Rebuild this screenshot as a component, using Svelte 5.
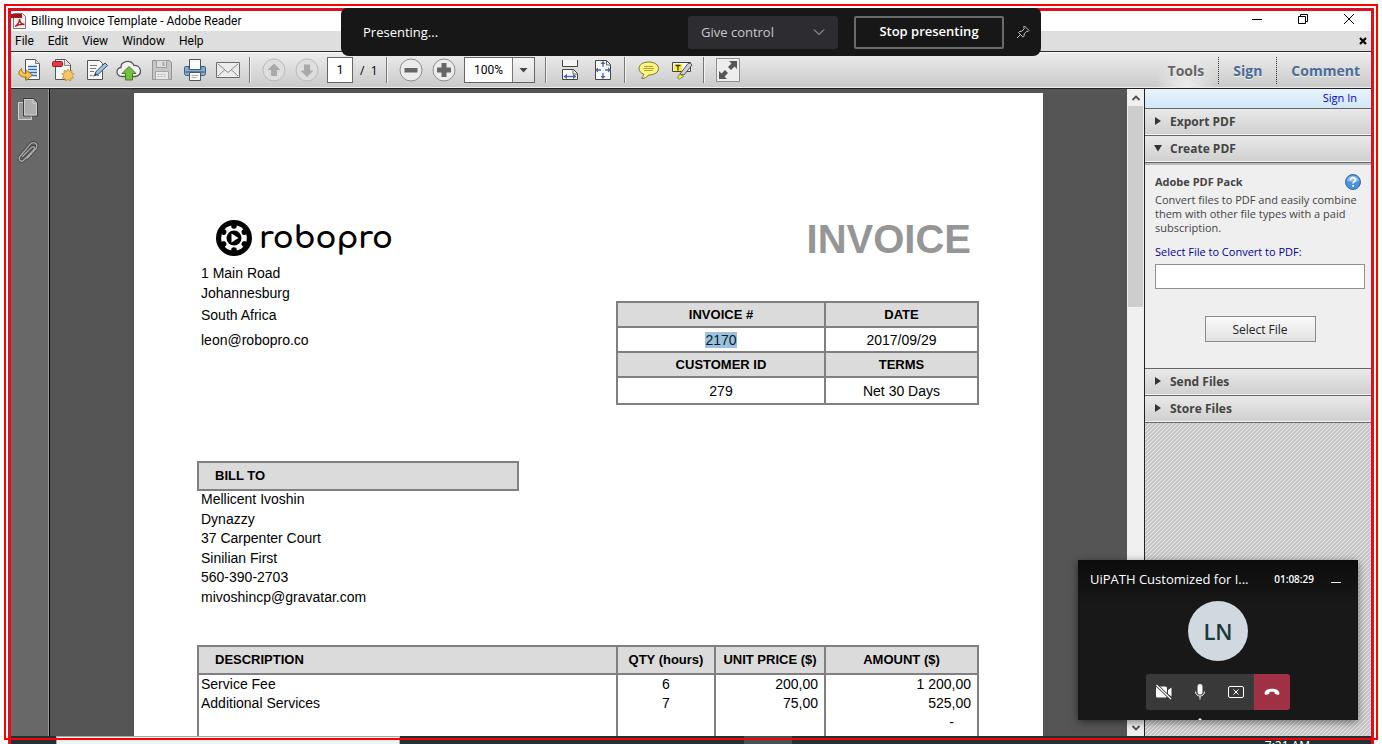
<script>
  const menus = ['File', 'Edit', 'View', 'Window', 'Help'];
  const address = ['1 Main Road', 'Johannesburg', 'South Africa', 'leon@robopro.co'];
  const billTo = [
    'Mellicent Ivoshin',
    'Dynazzy',
    '37 Carpenter Court',
    'Sinilian First',
    '560-390-2703',
    'mivoshincp@gravatar.com'
  ];
  const items = [
    { name: 'Service Fee', qty: '6', price: '200,00', amount: '1 200,00' },
    { name: 'Additional Services', qty: '7', price: '75,00', amount: '525,00' }
  ];
  const notches = [30, 90, 150, 210, 270, 330];
  let page = $state('1');
  let zoom = $state('100%');
  let filePath = $state('');
</script>

{#snippet section(label, open)}
  <button class="section" class:open aria-expanded={open}>
    <svg width="8" height="8" viewBox="0 0 8 8" aria-hidden="true">
      <path d={open ? 'M0 1h8L4 7.5z' : 'M1 0v8l6-4z'} fill="#333" />
    </svg>
    {label}
  </button>
{/snippet}

<div class="desktop">
  <div class="window">
    <header class="titlebar">
      <svg width="16" height="16" viewBox="0 0 16 16" aria-hidden="true">
        <path d="M2.500.5h9l3 3v12h-12z" fill="#f4f0f0" stroke="#777" />
        <path d="M0 1h11v4H0z" fill="#a3171c" />
        <path d="M4 13.500c3-2 4.500-5 4.500-7.500 0 3 2 5 5 5.500-4-.5-7 .5-9.500 2z" fill="none" stroke="#b01c22" stroke-width="1.400" />
      </svg>
      <h1>Billing Invoice Template - Adobe Reader</h1>
      <div class="caption">
        <button aria-label="Minimize"><svg width="12" height="12" viewBox="0 0 12 12"><path d="M1 6.500h10" stroke="#000" /></svg></button>
        <button aria-label="Restore"><svg width="12" height="12" viewBox="0 0 12 12"><path d="M1.500 3.500h7v7h-7zM3.500 3.500v-2h7v7h-2" fill="none" stroke="#000" /></svg></button>
        <button aria-label="Close"><svg width="12" height="12" viewBox="0 0 12 12"><path d="M1 1l10 10M11 1L1 11" stroke="#000" /></svg></button>
      </div>
    </header>

    <nav class="menubar">
      {#each menus as menu}<button>{menu}</button>{/each}
      <button class="doc-close" aria-label="Close document">
        <svg width="8" height="8" viewBox="0 0 8 8"><path d="M1 1l6 6M7 1L1 7" stroke="#000" stroke-width="2.200" /></svg>
      </button>
    </nav>

    <div class="toolbar">
      <button class="tool" aria-label="Open">
        <svg width="24" height="24" viewBox="0 0 24 24">
          <path d="M7.500 1.500h10l4 4v16h-14z" fill="#fafafa" stroke="#555" />
          <path d="M17.500 1.500v4h4" fill="#ddd" stroke="#777" />
          <path d="M10 8.500h9M10 11.500h9M10 14.500h9M12 17.500h7" stroke="#2c6fbe" stroke-width="1.300" />
          <path d="M3.500 10.500c-5 4-2.500 9 4.500 8.500v3.500l6.500-5.500L8 12v3.500c-3 0-4.500-1.500-4.500-5z" fill="#f2c14f" stroke="#a87a1c" />
        </svg>
      </button>
      <button class="tool" aria-label="Create PDF">
        <svg width="24" height="24" viewBox="0 0 24 24">
          <path d="M4.500 1.500h10l5 5v15h-15z" fill="#f6f6f6" stroke="#555" />
          <path d="M13.500 2v5.500h5.500" fill="#ddd" stroke="#888" />
          <rect x="1.500" y="3.500" width="10" height="5" rx="1" fill="#e03a44" stroke="#a81822" />
          <path d="M17 11l1.400 2.300 2.600-.8-.4 2.700 2.600.8-2 1.800 1.400 2.200-2.700.3-.3 2.700L17 21.500 14.400 23l-.3-2.700-2.700-.3 1.400-2.200-2-1.800 2.600-.8-.4-2.700 2.600.8z" fill="#f3c765" stroke="#c8994a" />
        </svg>
      </button>
      <button class="tool" aria-label="Sign or fill">
        <svg width="24" height="24" viewBox="0 0 24 24">
          <path d="M3.500 2.500h12l3 3v16h-15z" fill="#f8f8f8" stroke="#555" />
          <path d="M6 7.500h7M6 10.500h6M6 13.500h4M6 18c2-2 3 1 5-.5s2 .5 4 0" fill="none" stroke="#777" />
          <path d="M10.500 17.500l1.500-4 9-8.500 2.500 2.500-9 8.500z" fill="#9fc1e4" stroke="#35506e" />
          <path d="M10.500 17.500l1-2.500 1.500 1.500z" fill="#333" />
        </svg>
      </button>
      <button class="tool" aria-label="Upload">
        <svg width="26" height="24" viewBox="0 0 26 24">
          <path d="M6.500 18.500C-.5 18.500-.5 10 5 9.500 4.500 3.500 14.500.5 18 7.500c7-.5 9.500 9.500 1.500 11z" fill="#f2f2f2" stroke="#555" stroke-width="1.300" />
          <path d="M13 8.500l7 7h-3.500v6.500h-7v-6.500H6z" fill="#74c043" stroke="#3c8018" />
        </svg>
      </button>
      <button class="tool" aria-label="Save" disabled>
        <svg width="24" height="24" viewBox="0 0 24 24">
          <path d="M2.500 2.500h17l2 2v17h-19z" fill="#c5c5c5" stroke="#949494" />
          <path d="M6.500 2.500h10v7h-10z" fill="#dedede" stroke="#9c9c9c" /><path d="M12.500 4v4h2V4z" fill="#a5a5a5" />
          <path d="M5.500 13.500h13v8h-13z" fill="#e8e8e8" stroke="#a5a5a5" /><path d="M7.500 16.500h9M7.500 18.500h9" stroke="#b8b8b8" stroke-dasharray="2 1" />
        </svg>
      </button>
      <button class="tool" aria-label="Print">
        <svg width="24" height="24" viewBox="0 0 24 24">
          <path d="M6.500 1.500h11v10h-11z" fill="#fafafa" stroke="#555" />
          <path d="M1.500 9.500q0-1 1.500-1h3v3h12v-3h3q1.500 0 1.500 1v6q0 2-2 2h-17q-2 0-2-2z" fill="#85add3" stroke="#3e5f80" />
          <path d="M2.500 14h19" stroke="#355070" />
          <path d="M6.500 14.500h11v8h-11z" fill="#fafafa" stroke="#555" /><path d="M8.500 17.500h7M8.500 19.500h5" stroke="#aaa" />
        </svg>
      </button>
      <button class="tool" aria-label="Email">
        <svg width="24" height="24" viewBox="0 0 24 24">
          <path d="M.5 4.500h23v15H.5z" fill="#ececec" stroke="#6c6c6c" />
          <path d="M2 6l10 8.500L22 6M2 18l7-6.500M22 18l-7-6.500" fill="none" stroke="#8a8a8a" />
        </svg>
      </button>
      <span class="sep"></span>
      <button class="tool" aria-label="Previous page" disabled>
        <svg width="24" height="24" viewBox="0 0 24 24"><circle cx="12" cy="12" r="11" fill="#dedede" stroke="#b9b9b9" /><path d="M12 5.500l6.500 6.500H15v6H9v-6H5.500z" fill="#a9a9a9" /></svg>
      </button>
      <button class="tool" aria-label="Next page" disabled>
        <svg width="24" height="24" viewBox="0 0 24 24"><circle cx="12" cy="12" r="11" fill="#dedede" stroke="#b9b9b9" /><path d="M12 19l6.500-6.500H15v-6H9v6H5.500z" fill="#a9a9a9" /></svg>
      </button>
      <input class="page-no" aria-label="Page number" bind:value={page} />
      <span class="page-total">/&nbsp; 1</span>
      <span class="sep"></span>
      <button class="tool" aria-label="Zoom out">
        <svg width="24" height="24" viewBox="0 0 24 24"><circle cx="12" cy="12" r="11" fill="#ececec" stroke="#8c8c8c" /><path d="M5.500 10h13v4.500h-13z" fill="#666" /></svg>
      </button>
      <button class="tool" aria-label="Zoom in">
        <svg width="24" height="24" viewBox="0 0 24 24"><circle cx="12" cy="12" r="11" fill="#ececec" stroke="#8c8c8c" /><path d="M9.500 5h5v4.500H19v5h-4.500V19h-5v-4.500H5v-5h4.500z" fill="#666" /></svg>
      </button>
      <span class="zoom">
        <select aria-label="Zoom level" bind:value={zoom}><option>100%</option></select>
        <svg width="22" height="24" viewBox="0 0 22 24" aria-hidden="true"><path d="M.5 0v24" stroke="#777" /><path d="M7.500 10h8L11.500 14.500z" fill="#444" /></svg>
      </span>
      <span class="sep"></span>
      <button class="tool" aria-label="Fit width">
        <svg width="24" height="24" viewBox="0 0 24 24">
          <path d="M4.500 2v6.500h15V2" fill="#f4f4f4" stroke="#444" />
          <path d="M4.500 11.500h11l4 4v6h-15z" fill="#f8f8f8" stroke="#444" /><path d="M15 12v4h4" fill="none" stroke="#666" />
          <path d="M6 18.500h12" stroke="#4668a8" stroke-width="1.300" /><path d="M5.500 18.500l3.500-2.500v5zM18.500 18.500L15 16v5z" fill="#4668a8" />
        </svg>
      </button>
      <button class="tool" aria-label="Fit page">
        <svg width="24" height="24" viewBox="0 0 24 24">
          <path d="M4.500 2.500h11l4 4v15h-15z" fill="#f8f8f8" stroke="#444" /><path d="M15.500 3v4h4" fill="none" stroke="#666" />
          <path d="M12 4v5M12 15v5M5.500 12h4.500M14 12h5" stroke="#4668a8" stroke-width="1.300" />
          <path d="M12 3l2.500 3h-5zM12 21l2.500-3h-5zM4 12l3-2.500v5zM20 12l-3-2.500v5z" fill="#4668a8" />
        </svg>
      </button>
      <span class="sep"></span>
      <button class="tool" aria-label="Add sticky note">
        <svg width="24" height="24" viewBox="0 0 24 24">
          <path d="M11.500 4C5 4 2 7.500 2 10.500c0 3 2 4.500 4.500 5.500 0 2-1 3.500-2 4.500 3.500 0 6-1.500 7-3.500 6.500 0 10-3 10-6.500S18 4 11.500 4z" fill="#fdf583" stroke="#7a7430" />
          <path d="M7 8.500h9M6.500 10.500h10.500M7 12.500h9" stroke="#b0a22e" />
        </svg>
      </button>
      <button class="tool" aria-label="Highlight text">
        <svg width="24" height="24" viewBox="0 0 24 24">
          <path d="M2.500 4.500h18v9h-18z" fill="#fafafa" stroke="#444" /><path d="M4 6h8v7H4z" fill="#ffef2e" />
          <path d="M5.500 7.500h5M8 7.500v5" stroke="#333" stroke-width="1.300" />
          <path d="M10 16l8-10.500q3-1.500 4 1.500l-8 10z" fill="#cfcfcf" stroke="#555" />
          <path d="M9.500 16l4 2.500-4 2.500-2-1z" fill="#f3ec52" stroke="#888a30" />
        </svg>
      </button>
      <span class="sep"></span>
      <button class="tool" aria-label="Read mode">
        <svg width="24" height="24" viewBox="0 0 24 24">
          <path d="M.5.500h23v23H.5z" fill="#ededed" stroke="#8f8f8f" />
          <path d="M13 3h8v8l-2.500-2.500-3.500 3.500-3-3 3.500-3.500zM11 21H3v-8l2.500 2.500L9 12l3 3-3.500 3.500z" fill="#555" />
        </svg>
      </button>
      <div class="panes">
        <button class="active">Tools</button>
        <button>Sign</button>
        <button>Comment</button>
      </div>
    </div>

    <div class="body">
      <aside class="rail">
        <button aria-label="Page thumbnails">
          <svg width="24" height="26" viewBox="0 0 24 26">
            <path d="M2.500 6.500h13v17h-13z" fill="#999" stroke="#d0d0d0" />
            <path d="M7.500 2.500h10l4 4v13.500h-14z" fill="#aaa" stroke="#3d3d3d" /><path d="M8.500 3.500h8.500v4h3.500v11.500h-12z" fill="#adadad" stroke="#ccc" />
          </svg>
        </button>
        <button aria-label="Attachments">
          <svg width="24" height="26" viewBox="0 0 24 26" fill="none" stroke-linecap="round">
            <path d="M6.500 17.500l9-9c2-2 4 0 2.500 2L8.500 20.500c-3 3.500-7 .5-4.500-3L14 5.500c3.500-4 9-.5 6 4l-8.500 9.500" stroke="#404040" stroke-width="3" />
            <path d="M6.500 17.500l9-9c2-2 4 0 2.500 2L8.500 20.500c-3 3.500-7 .5-4.500-3L14 5.500c3.500-4 9-.5 6 4l-8.500 9.500" stroke="#a9a9a9" stroke-width="1.400" />
          </svg>
        </button>
      </aside>

      <main class="viewer">
        <article class="sheet">
          <div class="top">
            <div class="sender">
              <div class="logo">
                <svg width="38" height="38" viewBox="-19 -19 38 38" aria-hidden="true">
                  <circle r="18" />
                  <circle r="12.800" fill="#fff" />
                  {#each notches as angle}
                    <circle cx="12" r="2.800" transform="rotate({angle})" />
                  {/each}
                  <circle r="7.500" />
                  <path d="M-2.500-4.500L4.500 0l-7 4.500z" fill="#fff" />
                </svg>
                <span>robopro</span>
              </div>
              <address>{#each address as line}<span>{line}</span>{/each}</address>
            </div>
            <div class="facts">
              <h2>INVOICE</h2>
              <table class="meta">
                <tbody>
                  <tr><th>INVOICE #</th><th>DATE</th></tr>
                  <tr><td><mark>2170</mark></td><td>2017/09/29</td></tr>
                  <tr><th>CUSTOMER ID</th><th>TERMS</th></tr>
                  <tr><td>279</td><td>Net 30 Days</td></tr>
                </tbody>
              </table>
            </div>
          </div>

          <section>
            <h3>BILL TO</h3>
            <div class="customer">{#each billTo as line}<span>{line}</span>{/each}</div>
          </section>

          <table class="items">
            <thead>
              <tr><th class="desc">DESCRIPTION</th><th class="qty">QTY (hours)</th><th class="price">UNIT PRICE ($)</th><th class="amount">AMOUNT ($)</th></tr>
            </thead>
            <tbody>
              {#each items as item}
                <tr><td>{item.name}</td><td>{item.qty}</td><td>{item.price}</td><td>{item.amount}</td></tr>
              {/each}
              <tr class="empty"><td></td><td></td><td></td><td>-</td></tr>
            </tbody>
          </table>
        </article>
      </main>

      <div class="scroll">
        <svg width="16" height="17" viewBox="0 0 16 17"><path d="M4.500 11L8 7.500l3.500 3.500" fill="none" stroke="#505050" stroke-width="1.800" /></svg>
        <div class="thumb"></div>
        <svg width="16" height="17" viewBox="0 0 16 17"><path d="M4.500 7L8 10.500 11.500 7" fill="none" stroke="#505050" stroke-width="1.800" /></svg>
      </div>

      <aside class="panel">
        <div class="signin"><a href="#signin">Sign In</a></div>
        {@render section('Export PDF', false)}
        {@render section('Create PDF', true)}
        <div class="create">
          <div class="pack">
            <h4>Adobe PDF Pack</h4>
            <svg width="16" height="16" viewBox="0 0 16 16" role="img" aria-label="Help">
              <circle cx="8" cy="8" r="7.500" fill="#4a90dc" stroke="#2f6cb4" />
              <path d="M2 7a6 5 0 0 1 12 0q-6 2-12 0z" fill="#8bbcf0" />
              <path d="M5.500 6.200c0-3.400 5-3.200 5-.4 0 1.800-2.400 1.800-2.400 3.700M8.100 11v1.700" fill="none" stroke="#fff" stroke-width="1.700" />
            </svg>
          </div>
          <p>Convert files to PDF and easily combine them with other file types with a paid subscription.</p>
          <label for="file">Select File to Convert to PDF:</label>
          <input id="file" bind:value={filePath} />
          <button class="select-file">Select File</button>
        </div>
        {@render section('Send Files', false)}
        {@render section('Store Files', false)}
        <div class="hatch"></div>
      </aside>
    </div>

    <footer class="taskbar">
      <div class="search"></div>
      <div class="running"></div>
      <time>7:21 AM</time>
    </footer>
  </div>

  <div class="share-frame"></div>

  <div class="presenting">
    <span>Presenting...</span>
    <button class="control">Give control
      <svg width="12" height="8" viewBox="0 0 12 8" aria-hidden="true"><path d="M1 1.500l5 5 5-5" fill="none" stroke="#c8c8c8" /></svg>
    </button>
    <button class="stop">Stop presenting</button>
    <button class="pin" aria-label="Pin">
      <svg width="14" height="14" viewBox="0 0 14 14"><path d="M8.500 1l4.500 4.500-1 1-1.200-.2-2.500 2.500-.3 2.400-1 1L2.500 7.500l1-1 2.400-.3 2.400-2.500L7.600 2zM4.600 9.500L1 13" fill="none" stroke="#c4c4c4" /></svg>
    </button>
  </div>

  <section class="call">
    <header>
      <h5>UiPATH Customized for I...</h5>
      <time>01:08:29</time>
      <button aria-label="Minimize call"><svg width="10" height="10" viewBox="0 0 10 10"><path d="M0 8.500h10" stroke="#eee" /></svg></button>
    </header>
    <div class="avatar">LN</div>
    <div class="controls">
      <button aria-label="Turn camera on"><svg width="18" height="16" viewBox="0 0 18 16"><path d="M1 4q0-1.500 1.500-1.500h8Q12 2.500 12 4v8q0 1.500-1.500 1.500h-8Q1 13.500 1 12zM13 6l3.500-2.500v9L13 10z" fill="#fff" /><path d="M1 .5l15.500 15" stroke="#393939" stroke-width="3" /><path d="M1.500 1l14.500 14" stroke="#fff" stroke-width="1.200" /></svg></button>
      <button aria-label="Mute"><svg width="12" height="16" viewBox="0 0 12 16"><rect x="3.500" y="0" width="5" height="10.500" rx="2.500" fill="#fff" /><path d="M1.500 7.500c0 6 9 6 9 0M6 12v3.500" fill="none" stroke="#fff" /></svg></button>
      <button aria-label="Stop sharing"><svg width="16" height="12" viewBox="0 0 16 12"><rect x=".5" y=".5" width="15" height="11" rx="1.500" fill="none" stroke="#fff" /><path d="M5.500 3.500l5 5M10.500 3.500l-5 5" stroke="#fff" /></svg></button>
      <button class="hangup" aria-label="Leave"><svg width="16" height="8" viewBox="0 0 16 8"><path d="M8 .8c3.800 0 6.800 1.400 7.300 3.700.3 1.600-.3 2.500-1.500 2.300l-2.200-.5c-.8-.2-1-.6-1-1.300l-.2-1C9 3.600 7 3.600 5.600 4l-.2 1c0 .7-.2 1.100-1 1.300l-2.200.5C1 7 .4 6.100.7 4.500 1.200 2.200 4.200.8 8 .8z" fill="#fff" /></svg></button>
    </div>
    <svg class="caret" width="4" height="2" viewBox="0 0 4 2" aria-hidden="true"><path d="M0 2l2-2 2 2z" fill="#fff" /></svg>
  </section>
</div>

<style>
  :global(body) { margin: 0; background: #fff; }
  * { box-sizing: border-box; }
  h1, h2, h3, h4, h5, p { margin: 0; }
  svg { display: block; flex: none; }
  button { border: 0; padding: 0; background: none; font: inherit; color: inherit; }
  .desktop {
    position: relative;
    height: 100vh;
    padding: 8px 8px 0;
    overflow: hidden;
    font-family: 'Open Sans', 'Noto Sans', sans-serif;
    font-size: 12px;
    color: #000;
  }
  .window {
    height: 100%;
    display: flex;
    flex-direction: column;
    border: solid #dd1023;
    border-width: 3px 3px 0;
  }
  .share-frame { position: absolute; inset: 4px; border: 2px solid #f00; pointer-events: none; }

  .titlebar, .menubar { font-family: Roboto, 'Open Sans', sans-serif; }
  .titlebar { display: flex; align-items: center; gap: 4px; height: 20px; background: #fff; }
  h1 { font-size: 12px; font-weight: 400; line-height: 16px; }
  .caption { display: flex; gap: 34px; margin-left: auto; padding-right: 16px; }
  .caption svg { margin-bottom: 4px; }
  .menubar {
    display: flex;
    align-items: center;
    gap: 14px;
    height: 21px;
    padding: 0 4px;
    background: #dedede;
    border-bottom: 1px solid #2d2d2d;
  }
  .doc-close { margin-left: auto; }

  .toolbar {
    display: flex;
    align-items: center;
    height: 37px;
    padding-left: 2px;
    background: linear-gradient(#ededed, #c9c9c9);
    border-bottom: 1px solid #222;
    box-shadow: inset 0 1px #f8f8f8, inset 0 -1px #eee;
  }
  .tool { width: 33px; height: 28px; display: grid; place-items: center; flex: none; }
  .sep { width: 2px; height: 26px; margin: 0 6px 0 5px; border-left: 1px solid #777; border-right: 1px solid #f2f2f2; flex: none; }
  .page-no { width: 26px; height: 26px; margin-left: 4px; padding: 0; border: 1px solid #666; text-align: center; font: 12px Roboto, sans-serif; }
  .page-total { width: 28px; padding-left: 7px; white-space: nowrap; }
  .zoom { position: relative; width: 71px; height: 26px; margin: 0 5px 0 4px; border: 1px solid #666; background: #fff; flex: none; }
  .zoom select { width: 100%; height: 24px; padding: 0 0 0 9px; border: 0; appearance: none; background: transparent; font: 12px Roboto, sans-serif; color: #000; }
  .zoom svg { position: absolute; right: 0; top: 0; background: linear-gradient(#f4f4f4, #ddd); pointer-events: none; }
  .panes { display: flex; align-self: stretch; align-items: center; margin-left: auto; font-size: 14px; font-weight: 700; color: #4a6c98; }
  .panes button { height: 27px; padding: 0 14px; text-shadow: 0 1px #f2f2f2; }
  .panes button + button { border-left: 1px dotted #333; }
  .panes button:last-child { padding-right: 11px; }
  .panes .active { align-self: stretch; height: auto; color: #666; background: radial-gradient(ellipse at 50% 100%, #eee, transparent 70%); }

  .body { flex: 1; min-height: 0; display: flex; }
  .rail {
    width: 39px;
    display: flex;
    flex-direction: column;
    align-items: center;
    gap: 17px;
    padding: 7px 5px 0 0;
    background: #686868;
    border-right: 1px solid #000;
    box-shadow: inset -1px 0 #999;
  }
  .viewer { flex: 1; min-width: 0; padding-top: 4px; overflow: hidden; background: #555; font-family: 'Liberation Sans', Arial, sans-serif; }
  .sheet { width: 909px; min-height: 100%; margin: 0 auto; padding: 126px 64px 0 63px; background: #fff; font-size: 14px; }
  .top { display: flex; justify-content: space-between; height: 242px; }
  .logo { display: flex; align-items: center; gap: 6px; height: 38px; margin: 0 0 6px 18px; font: 700 31px Comfortaa, Lato, sans-serif; line-height: 36px; }
  address { display: grid; grid-template-rows: 20px 20px 24px 26px; align-items: center; padding-left: 4px; font-style: normal; }
  .facts { width: 363px; }
  h2 { padding-right: 8px; text-align: right; font-size: 40px; line-height: 40px; color: #969696; }
  table { border-collapse: collapse; table-layout: fixed; width: 100%; }
  th { background: #dbdbdb; font-size: 13px; font-weight: 700; }
  th, td { padding: 0; border: 2px solid #808080; }
  .meta { margin-top: 42px; text-align: center; }
  .meta tr { height: 25px; }
  .meta tr > :first-child { width: 208px; }
  .meta tr:last-child { height: 27px; }
  mark { background: #9bc1dc; color: #0b1a2a; }
  h3 { width: 322px; height: 30px; padding-left: 16px; border: 2px solid #808080; background: #dbdbdb; font-size: 13px; line-height: 25px; }
  .customer { display: grid; grid-auto-rows: 1fr; align-items: start; height: 117px; padding-left: 4px; }
  .items { margin-top: 37px; }
  .items th { height: 28px; padding-bottom: 2px; }
  .items .desc { width: 419px; padding-left: 16px; text-align: left; }
  .qty { width: 98px; }
  .price { width: 110px; }
  .items td { height: 19px; line-height: 19px; border-top: 0; border-bottom: 0; text-align: right; padding-right: 6px; }
  .items td:first-child { text-align: left; padding: 0 0 0 2px; }
  .items td:nth-child(2) { text-align: center; padding: 0; }
  .empty td { height: 60px; vertical-align: top; }
  .items .empty td:last-child { padding-right: 23px; }

  .scroll { width: 18px; display: flex; flex-direction: column; padding: 0 1px; background: #f0f0f0; border-right: 1px solid #222; }
  .thumb { width: 15px; height: 201px; margin-bottom: auto; background: #cdcdcd; }

  .panel { width: 226px; display: flex; flex-direction: column; font-size: 11px; }
  .signin { height: 19px; padding-right: 14px; text-align: right; line-height: 18px; background: linear-gradient(#e8f4fd, #d3e7f7); }
  .signin a { color: #0000d8; text-decoration: none; }
  .section {
    display: flex;
    align-items: center;
    gap: 8px;
    height: 27px;
    padding: 0 9px 2px;
    border-top: 1px solid #666;
    background: linear-gradient(#e9e9e9, #cfcfcf);
    box-shadow: inset 0 -1px #f4f4f4;
    font-size: 12px;
    font-weight: 700;
    color: #444;
  }
  .create { height: 206px; padding: 11px 6px 0 10px; border-top: 1px solid #666; background: #efefef; color: #444; box-shadow: inset 0 2px #bbb; }
  .pack { display: flex; justify-content: space-between; height: 19px; padding-right: 4px; }
  h4 { font-size: 11px; line-height: 16px; }
  .create p { height: 40px; font-size: 11px; line-height: 14px; }
  .create label { display: block; margin: 11px 0 4px; line-height: 16px; color: #00009c; }
  .create input { width: 100%; height: 25px; border: 1px solid #8f8f8f; background: #fff; display: block; }
  .select-file { display: block; width: 111px; height: 26px; margin: 27px auto 0; border: 1px solid #8a8a8a; background: linear-gradient(#fafafa, #e2e2e2); font-size: 12px; color: #222; }
  .hatch {
    flex: 1;
    border-top: 1px solid #666;
    background: linear-gradient(135deg, #ececec 12.5%, #c6c6c6 12.5% 50%, #ececec 50% 62.5%, #c6c6c6 62.5%) 0 0 / 4px 4px;
  }

  .taskbar { display: flex; height: 8px; overflow: hidden; background: #22303a; }
  .search { width: 344px; margin-left: 45px; background: #f2f2f2; border: 1px solid #aaa; border-width: 1px 1px 0; }
  .running { width: 48px; margin-left: 344px; background: #46535c; }
  .taskbar time { margin: 3px 61px 0 auto; color: #fff; line-height: 14px; }

  .presenting {
    position: absolute;
    top: 8px;
    left: 0;
    right: 0;
    width: 700px;
    height: 48px;
    margin: 0 auto;
    padding: 0 11px 0 22px;
    display: flex;
    align-items: center;
    border-radius: 6px 6px 8px 8px;
    background: #171717;
    color: #fff;
    font-size: 13px;
  }
  .control { display: flex; justify-content: space-between; align-items: center; width: 150px; height: 33px; margin-left: auto; padding: 0 13px; border-radius: 3px; background: #2d2c31; color: #c8c8c8; }
  .stop { width: 150px; height: 33px; margin: 0 12px 0 16px; padding-bottom: 2px; border: 2px solid #6a6a6a; border-radius: 2px; font-weight: 600; }

  .call { position: absolute; right: 24px; bottom: 24px; width: 280px; height: 160px; background: linear-gradient(#0c0c0c, #181818 45px); color: #fff; box-shadow: 0 2px 8px rgb(0 0 0 / 50%); }
  .call header { display: flex; align-items: center; height: 41px; padding: 0 17px 4px 12px; }
  h5 { flex: 1; font-size: 13px; font-weight: 400; white-space: nowrap; }
  .call time { margin-right: 17px; font-size: 10px; font-weight: 600; }
  .avatar { display: grid; place-items: center; width: 60px; height: 60px; margin: 0 auto 13px; border-radius: 50%; background: #cfd9df; color: #1b3740; font-size: 22px; font-weight: 600; }
  .controls { display: flex; width: 144px; margin: 0 auto; border-radius: 3px; overflow: hidden; background: #393939; }
  .controls button { flex: 1; height: 36px; display: grid; place-items: center; }
  .controls .hangup { background: #a03044; }
  .caret { position: absolute; bottom: 0; left: 120px; }
</style>
